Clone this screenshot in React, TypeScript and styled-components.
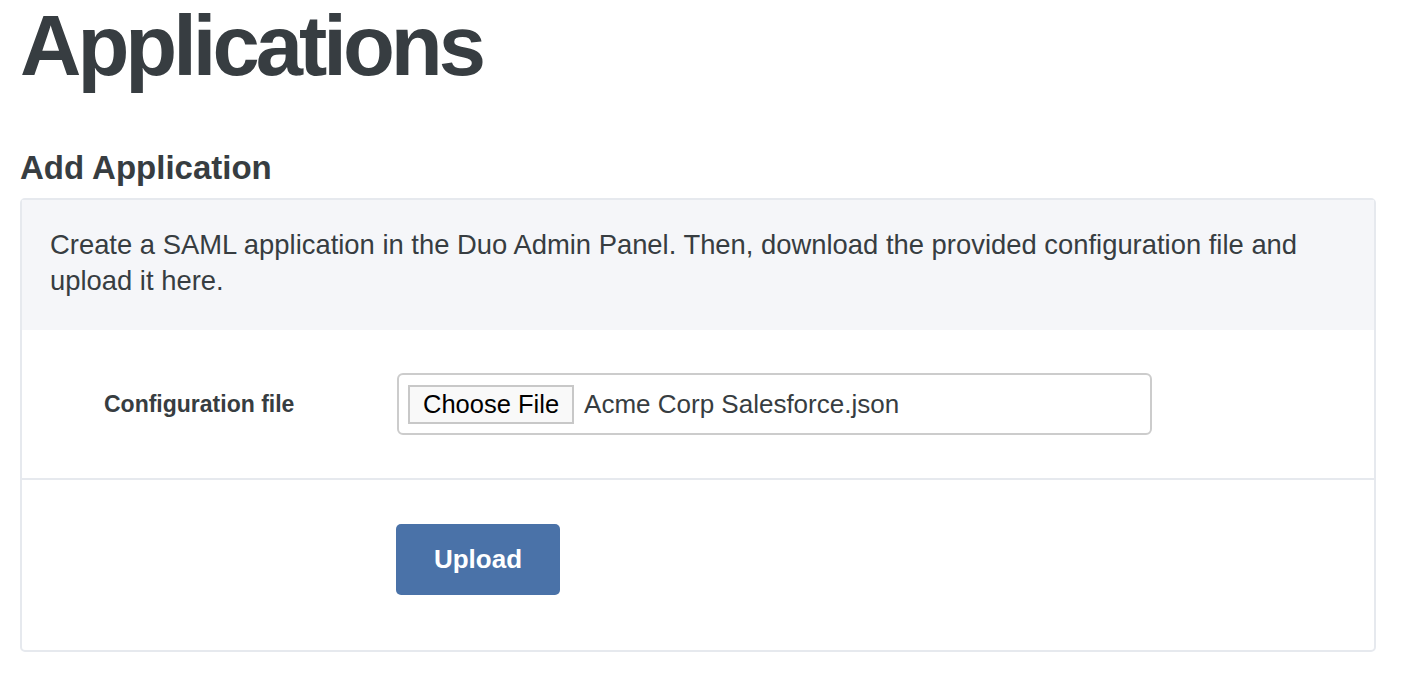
import React from 'react';
import styled, { createGlobalStyle } from 'styled-components';

const palette = {
  ink: '#373d41',
  border: '#e6e9ee',
  headerBg: '#f5f6f9',
  inputBorder: '#cccccc',
  primary: '#4a72a8',
  white: '#ffffff',
};

const GlobalStyle = createGlobalStyle`
  html, body {
    margin: 0;
    padding: 0;
    background: ${palette.white};
  }
  body {
    font-family: "Liberation Sans", Arial, sans-serif;
    color: ${palette.ink};
  }
`;

const App: React.FC = () => {
  return (
    <>
      <GlobalStyle />
      <Page>
        <Title>Applications</Title>
        <SectionTitle>Add Application</SectionTitle>
        <Panel>
          <PanelHeader>
            Create a SAML application in the Duo Admin Panel. Then, download
            the provided configuration file and upload it here.
          </PanelHeader>
          <FormRow>
            <Label>Configuration file</Label>
            <FileInput>
              <ChooseButton>Choose File</ChooseButton>
              <FileName>Acme Corp Salesforce.json</FileName>
            </FileInput>
          </FormRow>
          <FormRow $actions>
            <span />
            <PrimaryButton>Upload</PrimaryButton>
          </FormRow>
        </Panel>
      </Page>
    </>
  );
};

const Page = styled.div`
  padding: 2px 26px 0 20px;
  width: 1356px;
`;

const Title = styled.h1`
  font-size: 85px;
  font-weight: 700;
  letter-spacing: -4px;
  line-height: 88px;
  margin: 0;
`;

const SectionTitle = styled.h2`
  font-size: 33px;
  font-weight: 700;
  line-height: 36px;
  margin: 60px 0 12px;
`;

const Panel = styled.div`
  border: 2px solid ${palette.border};
  border-radius: 5px;
  display: flex;
  flex-direction: column;
`;

const PanelHeader = styled.div`
  background-color: ${palette.headerBg};
  font-size: 27.4px;
  line-height: 36px;
  padding: 27px 30px 31px 28px;
`;

const FormRow = styled.div<{ $actions?: boolean }>`
  align-items: center;
  border-top: ${({ $actions }) =>
    $actions ? `2px solid ${palette.border}` : 'none'};
  display: grid;
  grid-template-columns: 375px 1fr;
  padding: ${({ $actions }) => ($actions ? '44px 0 55px' : '43px 0')};
`;

const Label = styled.label`
  font-size: 23px;
  font-weight: 700;
  padding-left: 82px;
`;

const FileInput = styled.div`
  align-items: center;
  border: 2px solid ${palette.inputBorder};
  border-radius: 6px;
  box-sizing: border-box;
  display: flex;
  gap: 10px;
  height: 62px;
  padding: 0 9px;
  width: 755px;
`;

const ChooseButton = styled.span`
  background: #f9f9f9;
  border: 2px solid #c8c8c8;
  box-sizing: border-box;
  color: #000;
  font-size: 25.5px;
  height: 39px;
  line-height: 35px;
  padding: 0 13px;
`;

const FileName = styled.span`
  font-size: 26px;
`;

const PrimaryButton = styled.button`
  background-color: ${palette.primary};
  border: none;
  border-radius: 5px;
  color: ${palette.white};
  font-family: inherit;
  font-size: 26px;
  font-weight: 700;
  height: 71px;
  justify-self: start;
  margin-left: -1px;
  width: 164px;
`;

export default App;
